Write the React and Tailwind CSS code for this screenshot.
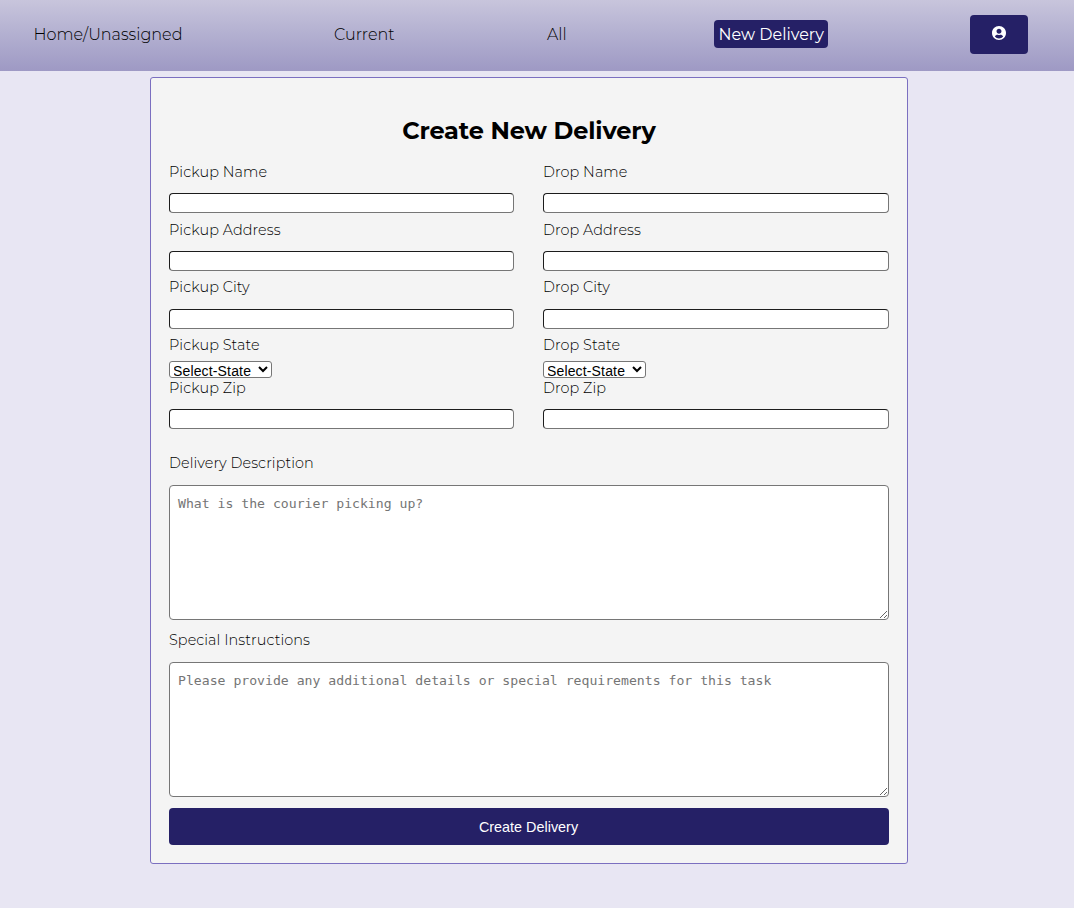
import React from "react";

function NavLink({ children, className }) {
  return (
    <a href="#" className={`flex h-7 shrink-0 items-center whitespace-nowrap rounded pt-px text-base ${className}`}>
      {children}
    </a>
  );
}

function Label({ children }) {
  return (
    <span className="block h-5 whitespace-nowrap text-[14.4px] font-light leading-5 tracking-[0.08px] text-black">
      {children}
    </span>
  );
}

function TextField({ label, className = "", inputGap = "mt-[11px]" }) {
  return (
    <label className={`block ${className}`}>
      <Label>{label}</Label>
      <input
        type="text"
        className={`${inputGap} block h-5 w-full rounded-[4px] border border-t-[#1c1c1c] border-l-[#1c1c1c] border-r-[#767676] border-b-[#767676] bg-white px-1 text-[13px] outline-none`}
      />
    </label>
  );
}

function StateField({ label }) {
  return (
    <label className="mt-[6px] block">
      <Label>{label}</Label>
      <select className="mt-[6px] block h-[17px] w-[103px] rounded-[3px] border border-[#767676] bg-white p-0 font-['Liberation_Sans',Arial,sans-serif] text-[14px] leading-none tracking-[0.15px] -indent-px text-black">
        <option>Select-State</option>
      </select>
    </label>
  );
}

function AddressColumn({ kind }) {
  return (
    <div>
      <TextField label={`${kind} Name`} />
      <TextField label={`${kind} Address`} className="mt-[7px]" />
      <TextField label={`${kind} City`} className="mt-[6px]" inputGap="mt-3" />
      <StateField label={`${kind} State`} />
      <TextField label={`${kind} Zip`} />
    </div>
  );
}

function NotesField({ label, placeholder, className }) {
  return (
    <label className={`block ${className}`}>
      <Label>{label}</Label>
      <textarea
        placeholder={placeholder}
        className="mt-3 block h-[135px] w-full resize rounded-[4px] border border-[#767676] bg-white px-2 py-[9px] font-['DejaVu_Sans_Mono',monospace] text-[13.15px] leading-[17px] outline-none placeholder:text-[#757575]"
      />
    </label>
  );
}

export default function App() {
  return (
    <div className="min-h-[908px] bg-[#e8e6f3] font-['Montserrat','Inter',sans-serif]">
      <nav className="flex h-[71px] items-start gap-[142px] bg-linear-to-b from-[#c8c5dc] via-[#b2afd0] to-[#9e99c4] pl-[29px] text-black">
        <NavLink className="mt-5 w-[158px] pl-[4.5px] font-light">Home/Unassigned</NavLink>
        <NavLink className="mt-5 w-[71px] pl-[5px] font-light">Current</NavLink>
        <NavLink className="mt-5 w-[30px] pl-[5px] font-light">All</NavLink>
        <NavLink className="mt-5 w-[114px] bg-[#252066] pl-[4.5px] text-white">New Delivery</NavLink>
        <button aria-label="Account" className="mt-[15px] flex h-[39px] w-[58px] shrink-0 justify-center rounded bg-[#252066] pt-[11px] text-white">
          <svg width="14" height="14" viewBox="0 0 496 496" fill="currentColor">
            <path d="M248 0C111 0 0 111 0 248s111 248 248 248 248-111 248-248S385 0 248 0zm0 96c48.600 0 88 39.400 88 88s-39.400 88-88 88-88-39.400-88-88 39.400-88 88-88zm0 344c-58.700 0-111.300-26.600-146.500-68.200 18.800-35.400 55.600-59.800 98.500-59.800 2.400 0 4.800.4 7.100 1.100 13 4.200 26.600 6.900 40.900 6.900 14.300 0 28-2.700 40.900-6.900 2.300-.7 4.700-1.100 7.100-1.100 42.900 0 79.700 24.400 98.500 59.800C359.300 413.400 306.700 440 248 440z" />
          </svg>
        </button>
      </nav>
      <main className="pt-[6px] pl-[150px]">
        <form className="h-[787px] w-[758px] rounded-[3px] border border-[#7b6fc0] bg-[#f4f4f4] px-[18px]">
          <h1 className="pt-[37px] text-center text-2xl font-bold leading-8 tracking-[-0.12px] text-black">Create New Delivery</h1>
          <div className="mt-[15px] grid grid-cols-[345px_346px] gap-[29px]">
            <AddressColumn kind="Pickup" />
            <AddressColumn kind="Drop" />
          </div>
          <NotesField label="Delivery Description" placeholder="What is the courier picking up?" className="mt-6" />
          <NotesField
            label="Special Instructions"
            placeholder="Please provide any additional details or special requirements for this task"
            className="mt-[10px]"
          />
          <button type="button" className="mt-[11px] block h-[37px] w-full rounded bg-[#252066] pt-0.5 pr-px font-['Liberation_Sans',Arial,sans-serif] text-[14.4px] text-white">
            Create Delivery
          </button>
        </form>
      </main>
    </div>
  );
}
